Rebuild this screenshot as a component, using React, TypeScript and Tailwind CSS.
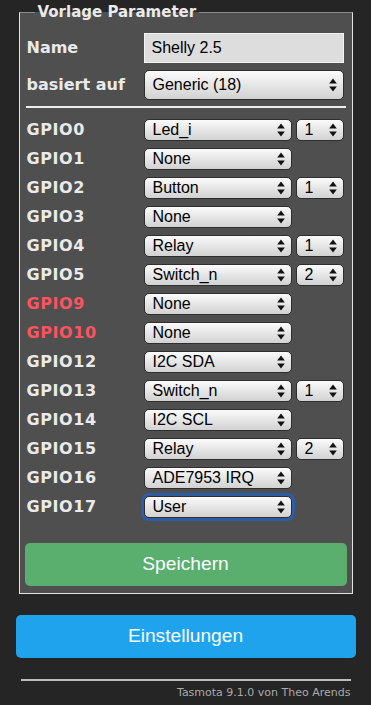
import React from 'react'

type Row = {
  pin: string
  value: string
  index?: string
  warn?: boolean
  focus?: boolean
}

const rows: Row[] = [
  { pin: 'GPIO0', value: 'Led_i', index: '1' },
  { pin: 'GPIO1', value: 'None' },
  { pin: 'GPIO2', value: 'Button', index: '1' },
  { pin: 'GPIO3', value: 'None' },
  { pin: 'GPIO4', value: 'Relay', index: '1' },
  { pin: 'GPIO5', value: 'Switch_n', index: '2' },
  { pin: 'GPIO9', value: 'None', warn: true },
  { pin: 'GPIO10', value: 'None', warn: true },
  { pin: 'GPIO12', value: 'I2C SDA' },
  { pin: 'GPIO13', value: 'Switch_n', index: '1' },
  { pin: 'GPIO14', value: 'I2C SCL' },
  { pin: 'GPIO15', value: 'Relay', index: '2' },
  { pin: 'GPIO16', value: 'ADE7953 IRQ' },
  { pin: 'GPIO17', value: 'User', focus: true },
]

// up/down arrows of the mac select
const Arrows = () => (
  <svg width="8" height="14" viewBox="0 0 8 14" className="pointer-events-none absolute right-[6px] top-1/2 -translate-y-1/2">
    <path d="M4 0.5 L7.8 5.5 L0.2 5.5 Z" fill="#111" />
    <path d="M4 13.5 L7.8 8.5 L0.2 8.5 Z" fill="#111" />
  </svg>
)

const Select = ({
  value,
  width,
  height = 'h-[22px]',
  focus,
}: {
  value: string
  width: string
  height?: string
  focus?: boolean
}) => (
  <div
    className={`relative ${width} ${height} rounded-[5px] border border-[#2e2e2e] bg-gradient-to-b from-[#fbfbfb] via-[#e6e6e6] to-[#d2d2d2] ${
      focus ? 'ring-[3px] ring-[#2b5ea6]' : ''
    }`}
  >
    <div className="flex h-full items-center pl-[8px] font-['Liberation_Sans',Arial,sans-serif] text-[16px] leading-none text-black">
      {value}
    </div>
    <Arrows />
  </div>
)

export default function App() {
  return (
    <div className="min-h-[705px] bg-[#252525] pt-[3px]">
      <div className="mx-auto w-[340px]">
        <fieldset className="mx-[3px] border border-[#e4e4e4] border-t-[#8a8a8a] bg-[#4f4f4f] px-[5px] pt-[12px] pb-[7px]">
          <legend className="ml-[10px] px-[3px] font-['DejaVu_Sans',Verdana,sans-serif] text-[15px] font-bold leading-[18px] text-[#eaeaea]">
            Vorlage Parameter
          </legend>

          <div className="font-['DejaVu_Sans',Verdana,sans-serif] text-[16px] font-bold text-[#eaeaea]">
            <div className="flex h-[30px] items-center">
              <div className="w-[119px] pl-[2px]">Name</div>
              <div className="flex h-[30px] w-[200px] items-center border border-[#f4f4f4] bg-[#dddddd] pl-[7px] font-['Liberation_Sans',Arial,sans-serif] text-[16px] font-normal text-black">
                Shelly 2.5
              </div>
            </div>
            <div className="mt-[7px] flex h-[30px] items-center">
              <div className="w-[119px] pl-[2px]">basiert auf</div>
              <div className="font-normal">
                <Select value="Generic (18)" width="w-[200px]" height="h-[30px]" />
              </div>
            </div>

            <div className="mx-[1px] mt-[6px] h-[2px] bg-[#eeeeee]" />

            <div className="mt-[11px] flex flex-col gap-[7px]">
              {rows.map((r) => (
                <div key={r.pin} className="flex h-[22px] items-center">
                  <div className={`w-[119px] pl-[2px] tracking-[0.6px] ${r.warn ? 'text-[#fb5461]' : ''}`}>{r.pin}</div>
                  <div className="flex gap-[4px] font-normal">
                    <Select value={r.value} width="w-[148px]" focus={r.focus} />
                    {r.index && <Select value={r.index} width="w-[48px]" />}
                  </div>
                </div>
              ))}
            </div>
          </div>

          <button className="mt-[25px] h-[43px] w-full rounded-[5px] bg-[#5aae6e] font-['Liberation_Sans',Arial,sans-serif] text-[19.2px] text-[#faffff]">
            Speichern
          </button>
        </fieldset>

        <button className="mt-[21px] h-[43px] w-full rounded-[5px] bg-[#1fa3ec] font-['Liberation_Sans',Arial,sans-serif] text-[19.2px] text-[#faffff]">
          Einstellungen
        </button>

        <div className="mx-[5px] mt-[21px] h-[2px] bg-[#bdbdbd]" />
        <div className="mt-[4px] pr-[5px] text-right font-['DejaVu_Sans',Verdana,sans-serif] text-[11px] text-[#aaaaaa]">
          Tasmota 9.1.0 von Theo Arends
        </div>
      </div>
    </div>
  )
}
